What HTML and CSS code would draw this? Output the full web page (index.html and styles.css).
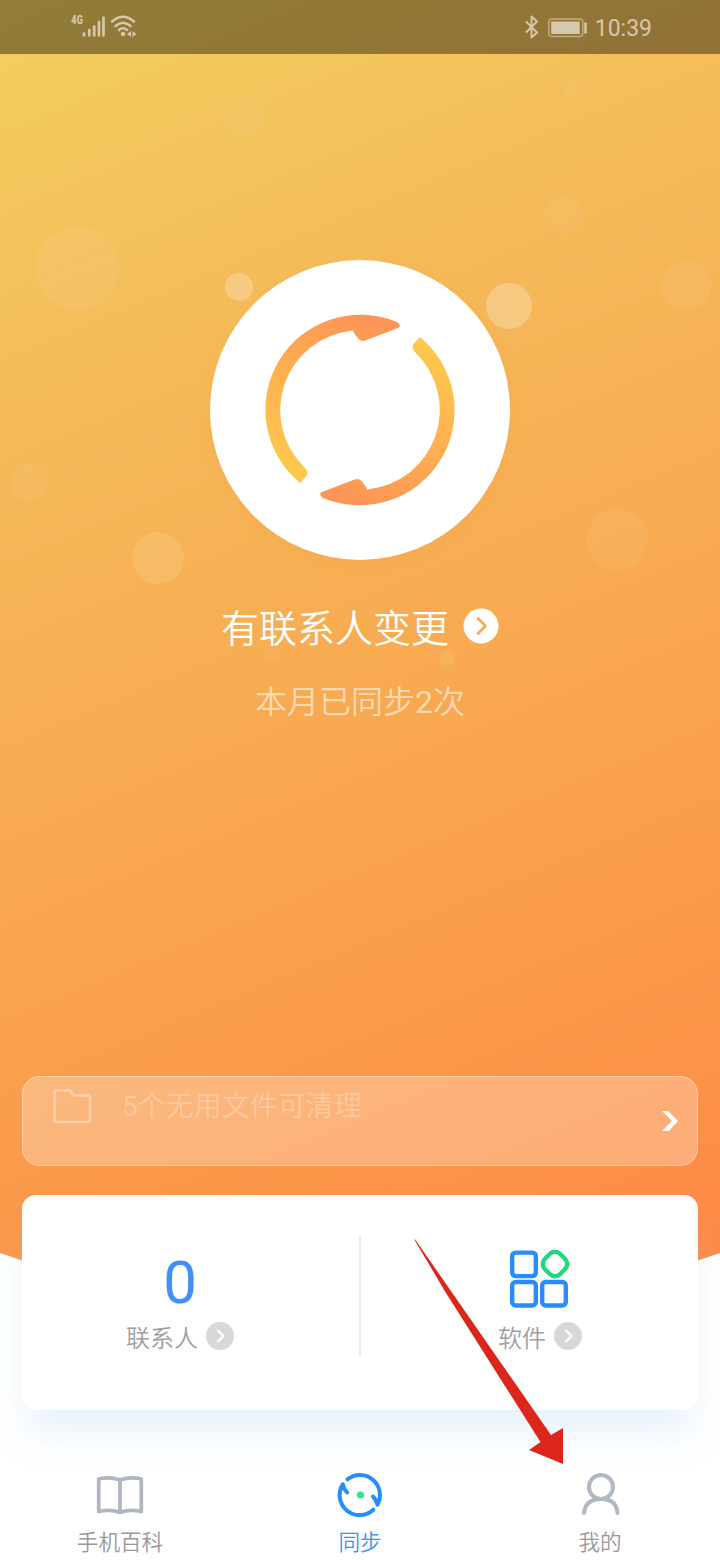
FILE: index.html
```html
<!DOCTYPE html>
<html lang="zh-CN">
<head>
<meta charset="utf-8">
<title>同步</title>
<link rel="stylesheet" href="styles.css">
</head>
<body>
<div class="screen">
  <svg class="backdrop" viewBox="0 0 720 1300" aria-hidden="true">
    <defs>
      <linearGradient id="sky" gradientUnits="userSpaceOnUse" x1="0" y1="0" x2="551" y2="1323">
        <stop offset="0" stop-color="#f2d05f"/>
        <stop offset=".22" stop-color="#f4be5a"/>
        <stop offset=".58" stop-color="#f9a750"/>
        <stop offset=".78" stop-color="#fb994a"/>
        <stop offset="1" stop-color="#ff8945"/>
      </linearGradient>
    </defs>
    <path d="M0 0H720V1253Q360 1380 0 1253Z" fill="url(#sky)"/>
    <g fill="#f8cf90">
      <circle cx="77" cy="268" r="42" opacity=".2"/>
      <circle cx="245" cy="119" r="19" opacity=".15"/>
      <circle cx="573" cy="90" r="10" opacity=".12"/>
      <circle cx="564" cy="215" r="19" opacity=".15"/>
      <circle cx="686" cy="286" r="25" opacity=".18"/>
      <circle cx="29" cy="482" r="19" opacity=".16"/>
      <circle cx="158" cy="558" r="26" opacity=".32"/>
      <circle cx="617" cy="540" r="31" opacity=".14"/>
      <circle cx="239" cy="287" r="14" opacity=".72"/>
      <circle cx="509" cy="306" r="23" opacity=".75"/>
      <circle cx="447" cy="658" r="8" opacity=".22"/>
      <circle cx="271" cy="654" r="9" opacity=".1"/>
    </g>
  </svg>

  <header class="status">
    <svg class="status-left" viewBox="0 0 70 30">
      <text x="1" y="14" class="net" textLength="12" lengthAdjust="spacingAndGlyphs">4G</text>
      <path d="M14 23.500v2M19.300 20v5.500M24.200 16.500v9M29 12v13.500M33.500 7.500v18" stroke="#d6c8ad" stroke-width="2.700" stroke-linecap="round" fill="none"/>
      <g fill="none" stroke="#d6c8ad" stroke-width="2.600" stroke-linecap="round">
        <path d="M42 11.500Q53 2 64 11.500"/><path d="M45.500 16Q53 9.500 60.500 16"/><path d="M49 20Q53 16.500 57 20"/>
      </g>
      <circle cx="53" cy="24" r="2.200" fill="#d6c8ad"/>
      <path d="M61 21v6l-4-3zM62.500 21v6l4-3z" fill="#d6c8ad"/>
    </svg>
    <div class="status-right">
      <svg class="bluetooth" width="16" height="26" viewBox="0 0 16 26"><path d="M2 7.500L13 18.500L7.500 23.500V2.500L13 7.500L2 18.500" fill="none" stroke="#d6c8ad" stroke-width="1.900" stroke-linejoin="round"/></svg>
      <svg class="battery" width="40" height="20" viewBox="0 0 40 20"><rect x=".8" y="1" width="34" height="17.500" rx="3" fill="none" stroke="#c1ad82" stroke-width="1.400"/><rect x="3.200" y="3.500" width="28.500" height="12.500" fill="#d6c8ad"/><path d="M37.500 5.500v9" stroke="#d6c8ad" stroke-width="2.500" stroke-linecap="round"/></svg>
      <span class="clock">10:39</span>
    </div>
  </header>

  <main class="hero">
    <div class="sync">
      <svg viewBox="0 0 300 300">
        <defs>
          <linearGradient id="ring" gradientUnits="userSpaceOnUse" x1="85" y1="215" x2="165" y2="65">
            <stop offset="0" stop-color="#fec84c"/><stop offset=".5" stop-color="#feb050"/><stop offset="1" stop-color="#fd9556"/>
          </linearGradient>
          <path id="half" d="M90 223A95 95 0 0 1 187 62Q192 65.500 188.500 67.700L156 80.200Q150.500 82.500 147 77.300L142.500 70.500A80 80 0 0 0 95 208Q99.500 213 96 216.500Z"/>
        </defs>
        <use href="#half" fill="url(#ring)"/>
        <use href="#half" fill="url(#ring)" transform="rotate(180 150 150)"/>
      </svg>
    </div>
    <div class="headline">
      <span class="headline-text">有联系人变更</span>
      <svg width="36" height="36" viewBox="0 0 36 36"><circle cx="18" cy="18" r="17.500" fill="#fff"/><path d="M15 10.500L22.500 18L15 25.500" fill="none" stroke="#f8ab52" stroke-width="2.800" stroke-linecap="round" stroke-linejoin="round"/></svg>
    </div>
    <p class="sub">本月已同步<span class="digit">2</span>次</p>
  </main>

  <section class="cleanup">
    <svg class="folder" width="40" height="36" viewBox="0 0 40 36"><path d="M4.500 2.500H18L22 7.500H36Q38 7.500 38 9.500V32Q38 34 36 34H4.500Q2.500 34 2.500 32V4.500Q2.500 2.500 4.500 2.500Z" fill="none" stroke="#fed0a8" stroke-width="2.500" stroke-linejoin="round"/></svg>
    <span class="cleanup-text"><span class="digit">5</span>个无用文件可清理</span>
    <svg class="more" width="18" height="22" viewBox="0 0 18 22"><path d="M1 1H7L17 11L8 21H1L11 11Z" fill="#fff"/></svg>
  </section>

  <section class="card">
    <div class="cell">
      <div class="count">0</div>
      <div class="label"><span class="label-text">联系人</span><svg width="28" height="28" viewBox="0 0 28 28"><circle cx="14" cy="14" r="14" fill="#d8d8d8"/><path d="M12 8.500L17.500 14L12 19.500" fill="none" stroke="#fff" stroke-width="2.300" stroke-linecap="round" stroke-linejoin="round"/></svg></div>
    </div>
    <div class="divider"></div>
    <div class="cell">
      <div class="count">
        <svg class="apps" width="60" height="58" viewBox="0 0 60 58" fill="none" stroke="#288cfd" stroke-width="4.400">
          <rect x="2.200" y="2.600" width="23.600" height="23.500" rx="3.500"/><rect x="2.200" y="32" width="23.600" height="23.500" rx="3.500"/><rect x="32.200" y="32" width="23.600" height="23.500" rx="3.500"/>
          <rect stroke="#23d77c" x="34.300" y="3.300" width="21.400" height="21.400" rx="7" transform="rotate(45 45 14)"/>
        </svg>
      </div>
      <div class="label"><span class="label-text">软件</span><svg width="28" height="28" viewBox="0 0 28 28"><circle cx="14" cy="14" r="14" fill="#d8d8d8"/><path d="M12 8.500L17.500 14L12 19.500" fill="none" stroke="#fff" stroke-width="2.300" stroke-linecap="round" stroke-linejoin="round"/></svg></div>
    </div>
  </section>

  <nav class="tabs">
    <a class="tab"><svg width="48" height="48" viewBox="0 0 48 48" fill="none" stroke="#b0b5c2" stroke-width="3.700" stroke-linejoin="round"><path d="M24 9Q14 5.500 2.700 8V40.500Q14 38 24 41.500Q34 38 45.300 40.500V8Q34 5.500 24 9ZM24 9V41.500"/></svg><span>手机百科</span></a>
    <a class="tab active"><svg width="48" height="48" viewBox="0 0 48 48" fill="none" stroke="#288cfd" stroke-width="4" stroke-linecap="round" stroke-linejoin="round"><path d="M11.500 8.300A20 20 0 0 1 41.400 33.700Q40.500 29 37 25.500"/><path d="M37.300 38.700A20 20 0 0 1 6.800 13.300Q7.500 18 11.300 21.500"/><circle cx="24.500" cy="24" r="3.600" fill="#38e284" stroke="none"/></svg><span>同步</span></a>
    <a class="tab"><svg width="48" height="48" viewBox="0 0 48 48" fill="none" stroke="#b0b8c6" stroke-width="4" stroke-linecap="round"><circle cx="25" cy="16" r="12"/><path d="M8 42Q9.500 28 25 28Q40.500 28 41.500 42"/></svg><span>我的</span></a>
  </nav>

  <svg class="pointer" viewBox="0 0 150 226"><path d="M0 -1L1.500 0L137 195L149 188V224L115 210L126.500 202L32 53Z" fill="#dc251b"/></svg>
</div>
</body>
</html>
```
FILE: styles.css
```css
* { box-sizing: border-box; }
body {
  margin: 0;
  font-family: Roboto, "Noto Sans CJK SC", sans-serif;
  font-weight: 350;
}
svg { display: block; flex: none; }
.screen {
  position: relative;
  width: 720px;
  height: 1560px;
  display: flex;
  flex-direction: column;
  overflow: hidden;
  background: #fff;
  isolation: isolate;
}
.backdrop {
  position: absolute;
  z-index: -1;
  top: 0;
  left: 0;
  width: 720px;
  height: 1300px;
}
.status {
  flex: none;
  height: 54px;
  padding: 1px 68px 0 70px;
  display: flex;
  align-items: center;
  justify-content: space-between;
  background: rgba(0, 0, 0, .4);
}
.status-left { width: 70px; height: 30px; margin-bottom: 5px; }
.net { font: 700 12px "Roboto Condensed", Roboto, sans-serif; fill: #d6c8ad; }
.status-right { display: flex; align-items: center; }
.bluetooth { margin-bottom: 2px; }
.battery { margin: 0 7px 0 8px; }
.clock { padding-top: 2px; font-size: 23px; font-weight: 400; line-height: 30px; color: #d6c8ad; }
.digit { font-weight: 400; }

.hero {
  flex: none;
  height: 1022px;
  padding-top: 206px;
  display: flex;
  flex-direction: column;
  align-items: center;
}
.sync {
  width: 300px;
  height: 300px;
  border-radius: 50%;
  background: #fff;
  box-shadow: 0 4px 12px rgba(245, 150, 60, .18);
}
.headline {
  margin-top: 38px;
  height: 56px;
  display: flex;
  align-items: center;
  gap: 14px;
  font-size: 38px;
  line-height: 56px;
  color: #fff;
}
.headline-text { padding-top: 5px; }
.sub {
  margin: 24px 0 0;
  font-size: 32px;
  line-height: 48px;
  color: rgba(255, 255, 255, .58);
}
.cleanup {
  flex: none;
  margin: 0 22px;
  height: 90px;
  padding: 11px 18px 0 29px;
  display: flex;
  align-items: flex-start;
  border: 1px solid rgba(255, 255, 255, .35);
  border-radius: 18px;
  background: rgba(255, 255, 255, .27);
}
.cleanup-text {
  padding-top: 2px;
  margin-left: 30px;
  font-size: 28px;
  line-height: 34px;
  color: #fdc99f;
}
.more { margin: 22px 0 0 auto; }
.card {
  flex: none;
  margin: 29px 22px 0;
  height: 215px;
  display: flex;
  align-items: flex-start;
  border-radius: 14px;
  background: #fff;
  box-shadow: 0 28px 36px -6px rgba(165, 210, 245, .28);
}
.cell {
  flex: 1;
  height: 100%;
  padding-top: 52px;
  display: flex;
  flex-direction: column;
  align-items: center;
}
.cell:first-child { padding-right: 21px; }
.cell:last-child { padding-left: 21px; }
.count {
  height: 70px;
  font-size: 60px;
  line-height: 72px;
  font-weight: 400;
  color: #408ffb;
}
.apps { margin-top: 3px; }
.label {
  margin-top: 5px;
  height: 28px;
  display: flex;
  align-items: center;
  gap: 8px;
  font-size: 24px;
  line-height: 28px;
  color: #a0a0a0;
}
.label-text { padding-top: 5px; }
.divider { width: 2px; height: 120px; margin-top: 41px; background: #ebebeb; }
.tabs {
  flex: none;
  margin-top: 61px;
  display: flex;
}
.tab {
  flex: 1;
  display: flex;
  flex-direction: column;
  align-items: center;
  gap: 8px;
  font-size: 21.600px;
  line-height: 32px;
  color: #999;
}
.active { color: #3b95f5; }
.pointer {
  position: absolute;
  left: 414px;
  top: 1240px;
  width: 150px;
  height: 226px;
  overflow: visible;
}
```
